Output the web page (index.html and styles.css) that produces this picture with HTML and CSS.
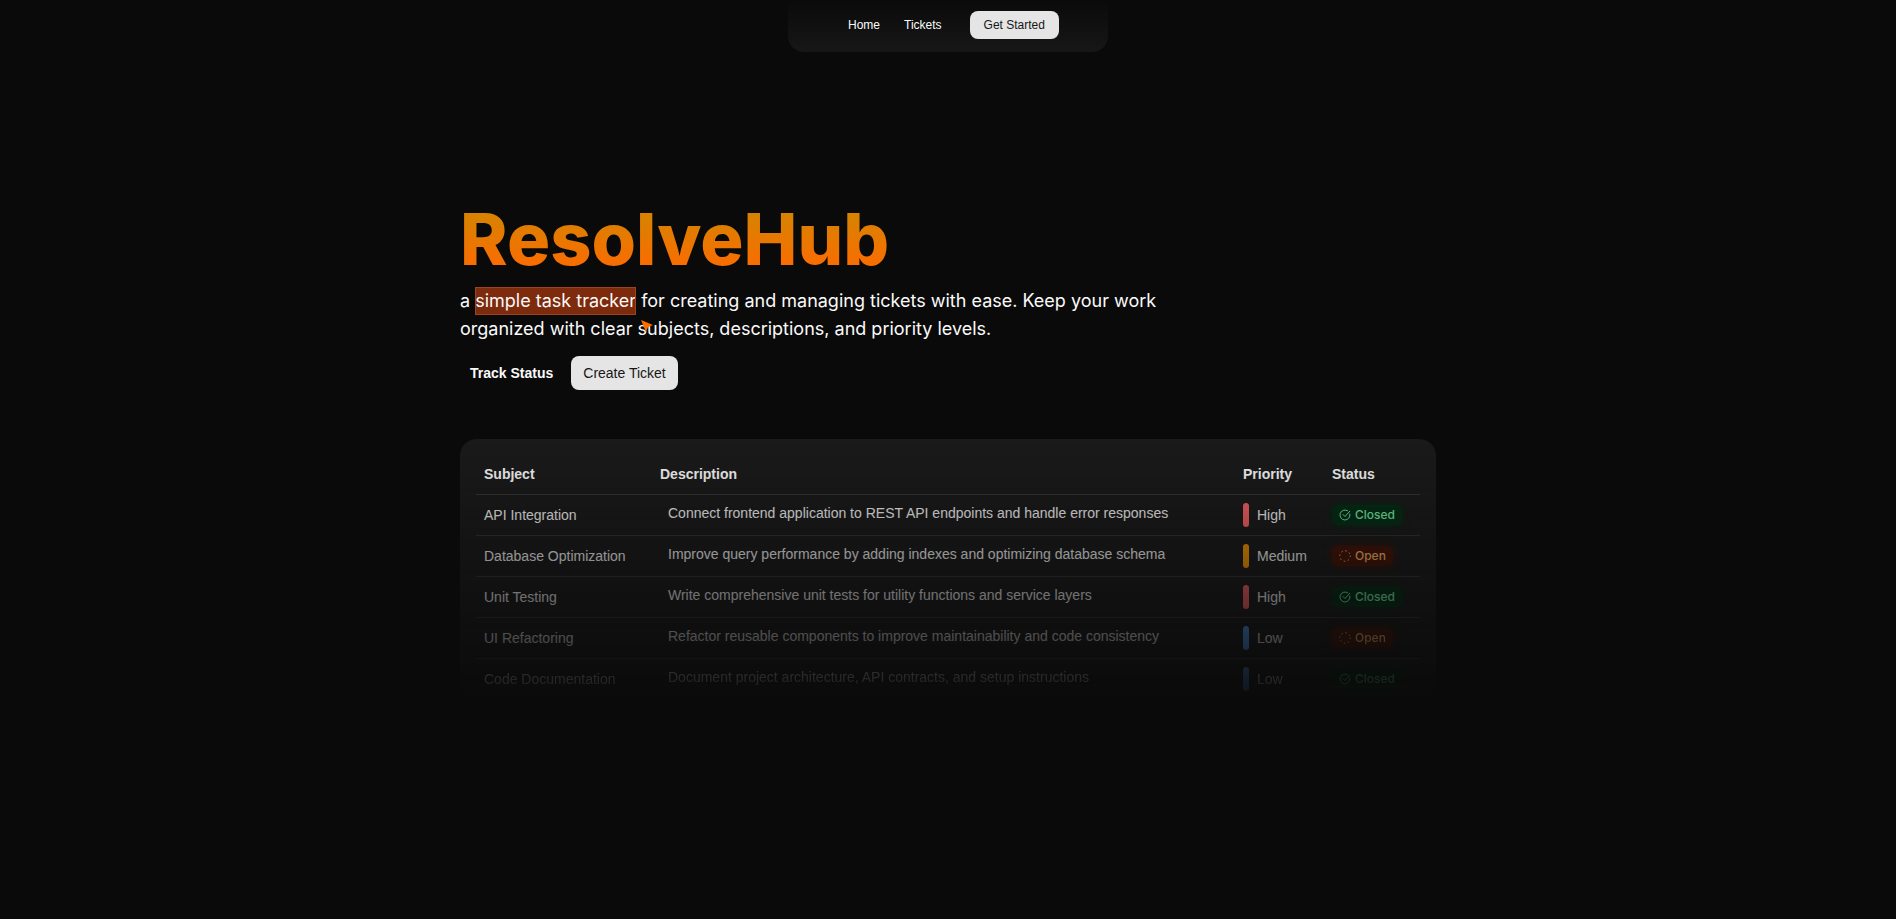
FILE: index.html
```html
<!DOCTYPE html>
<html lang="en">
<head>
  <meta charset="utf-8">
  <meta name="viewport" content="width=device-width, initial-scale=1.0">
  <title>ResolveHub</title>
  <link rel="stylesheet" href="styles.css">
</head>
<body>
  <svg class="sprite" aria-hidden="true">
    <symbol id="check" viewBox="0 0 24 24">
      <path d="M21.8 10A10 10 0 1 1 17 3.3"/>
      <path d="m8 11 4 4L21.5 4.5"/>
    </symbol>
    <symbol id="loader" viewBox="0 0 24 24">
      <circle cx="12" cy="12" r="10.5" stroke-dasharray="1.5 6.75"/>
    </symbol>
  </svg>

  <header class="header">
    <nav class="nav">
      <a class="nav-link" href="#">Home</a>
      <a class="nav-link" href="#tickets">Tickets</a>
      <button class="btn btn-small" type="button">Get Started</button>
    </nav>
  </header>

  <main class="container">
    <section class="hero">
      <h1 class="title">ResolveHub</h1>
      <p class="lead">a <span class="highlight">simple task tracker<svg class="pointer" viewBox="0 0 12 12" aria-hidden="true"><path d="M0 0 12 5 7 7 5 12Z"/></svg></span> for creating and managing tickets with ease. Keep your work organized with clear subjects, descriptions, and priority levels.</p>
      <div class="actions">
        <a class="track-link" href="#tickets">Track Status</a>
        <button class="btn" type="button">Create Ticket</button>
      </div>
    </section>

    <section class="card" id="tickets">
      <table class="tickets">
        <thead>
          <tr>
            <th class="col-subject">Subject</th>
            <th>Description</th>
            <th class="col-priority">Priority</th>
            <th class="col-status">Status</th>
          </tr>
        </thead>
        <tbody>
          <tr>
            <td>API Integration</td>
            <td class="description">Connect frontend application to REST API endpoints and handle error responses</td>
            <td><span class="priority high">High</span></td>
            <td><span class="badge closed"><svg class="icon"><use href="#check"/></svg>Closed</span></td>
          </tr>
          <tr>
            <td>Database Optimization</td>
            <td class="description">Improve query performance by adding indexes and optimizing database schema</td>
            <td><span class="priority medium">Medium</span></td>
            <td><span class="badge open"><svg class="icon"><use href="#loader"/></svg>Open</span></td>
          </tr>
          <tr>
            <td>Unit Testing</td>
            <td class="description">Write comprehensive unit tests for utility functions and service layers</td>
            <td><span class="priority high">High</span></td>
            <td><span class="badge closed"><svg class="icon"><use href="#check"/></svg>Closed</span></td>
          </tr>
          <tr>
            <td>UI Refactoring</td>
            <td class="description">Refactor reusable components to improve maintainability and code consistency</td>
            <td><span class="priority low">Low</span></td>
            <td><span class="badge open"><svg class="icon"><use href="#loader"/></svg>Open</span></td>
          </tr>
          <tr>
            <td>Code Documentation</td>
            <td class="description">Document project architecture, API contracts, and setup instructions</td>
            <td><span class="priority low">Low</span></td>
            <td><span class="badge closed"><svg class="icon"><use href="#check"/></svg>Closed</span></td>
          </tr>
        </tbody>
      </table>
    </section>
  </main>
</body>
</html>
```
FILE: styles.css
```css
* {
  box-sizing: border-box;
}

body {
  margin: 0;
  min-height: 100vh;
  background: #0a0a0a;
  color: #fafafa;
  font-family: Inter, "Liberation Sans", sans-serif;
  font-size: 14px;
  line-height: 20px;
}

a {
  color: inherit;
  text-decoration: none;
}

.sprite {
  display: none;
}

/* navigation */
.header {
  display: flex;
  justify-content: center;
}

.nav {
  display: flex;
  align-items: center;
  gap: 24px;
  padding: 11px 49px 13px 60px;
  border-radius: 0 0 16px 16px;
  background: linear-gradient(to bottom, #0a0a0a, #171717);
  font-family: "Liberation Sans", sans-serif;
  font-size: 12px;
}

.btn {
  height: 34px;
  padding: 0 12px;
  border: none;
  border-radius: 8px;
  background: #e5e5e5;
  color: #171717;
  font: inherit;
  cursor: pointer;
}

.btn-small {
  height: 28px;
  padding: 0 14px;
  margin-left: 4px;
}

/* hero */
.container {
  max-width: 1024px;
  margin: 0 auto;
  padding: 143px 24px 0;
}

.title {
  margin: 0;
  width: fit-content;
  background: linear-gradient(to top, #ff6900 10%, #d08700 90%);
  background-clip: text;
  -webkit-background-clip: text;
  color: transparent;
  font-size: 72px;
  font-weight: 800;
  line-height: 88px;
}

.lead {
  max-width: 720px;
  margin: 4px 0 0;
  font-size: 18px;
  line-height: 28px;
}

.highlight {
  display: inline-block;
  position: relative;
  background: #7e2a0c;
  outline: 1px solid #9a4420;
  outline-offset: -1px;
}

.pointer {
  position: absolute;
  top: 100%;
  left: 100%;
  width: 12px;
  height: 12px;
  margin: 5px;
  fill: #ff6900;
}

.actions {
  display: flex;
  align-items: center;
  gap: 18px;
  margin-top: 13px;
  padding-left: 10px;
  font-family: "Liberation Sans", sans-serif;
}

.track-link {
  font-weight: 600;
}

/* tickets preview */
.card {
  margin-top: 49px;
  padding: 16px 16px 0;
  border-radius: 16px;
  background: #1a1a1a;
  -webkit-mask-image: linear-gradient(to bottom, #000, transparent 105%);
  mask-image: linear-gradient(to bottom, #000, transparent 105%);
}

.tickets {
  width: 100%;
  border-collapse: collapse;
  table-layout: fixed;
  font-family: "Liberation Sans", sans-serif;
}

.tickets tr {
  height: 41px;
  border-bottom: 1px solid #333;
}

.tickets thead tr {
  height: 39px;
}

.tickets tbody tr:last-child {
  border-bottom: none;
}

.tickets th,
.tickets td {
  padding: 0 8px;
  text-align: left;
  white-space: nowrap;
}

.tickets th {
  font-weight: 600;
}

.tickets .description {
  padding: 0 16px 4px;
}

.col-subject {
  width: 176px;
}

.col-priority {
  width: 89px;
}

.col-status {
  width: 96px;
}

.priority {
  display: flex;
  align-items: center;
  gap: 8px;
}

.priority::before {
  content: "";
  width: 6px;
  height: 24px;
  border-radius: 4px;
  background: currentColor;
}

.high::before {
  background: #ff6467;
}

.medium::before {
  background: #fe9a00;
}

.low::before {
  background: #51a2ff;
}

.badge {
  display: inline-flex;
  align-items: center;
  gap: 4px;
  padding: 0 7px;
  border-radius: 6px;
  font-family: Inter, sans-serif;
  font-size: 12px;
  font-weight: 500;
  vertical-align: middle;
}

.closed {
  background: #032e15;
  box-shadow: 0 0 8px #032e15;
  color: #7bf1a8;
}

.open {
  background: #441306;
  box-shadow: 0 0 8px #441306;
  color: #ffb86a;
}

.icon {
  width: 12px;
  height: 12px;
  fill: none;
  stroke: currentColor;
  stroke-width: 2;
  stroke-linecap: round;
  stroke-linejoin: round;
}
```
